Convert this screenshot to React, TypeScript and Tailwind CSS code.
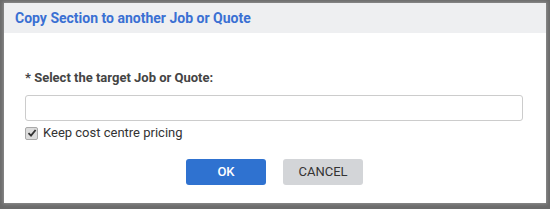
export default function App() {
  return (
    <div className="w-[550px] h-[209px] bg-[#6b6b6b] pt-[3px] pl-[4px] font-['Roboto',sans-serif]">
      <div className="w-[542px] h-[200px] bg-white flex flex-col shadow-[0_0_3px_1px_rgba(160,160,160,0.7)]">
        {/* Header */}
        <div className="h-[30px] bg-[#eeeff1] flex items-center px-[11px]">
          <h1 className="text-[14px] font-bold text-[#3a70d3]">Copy Section to another Job or Quote</h1>
        </div>

        {/* Body */}
        <div className="px-[21px] pt-[37px]">
          <label className="block text-[13px] font-bold text-[#444] leading-[16px]">* Select the target Job or Quote:</label>
          <input
            type="text"
            className="mt-[9px] block w-[498px] h-[26px] border border-[#cccccc] rounded-[3px] outline-none px-2 text-[13px]"
          />
          <label className="flex items-center gap-[5px] mt-[5px] text-[13px] text-[#333] leading-[14px]">
            <span className="w-[13px] h-[13px] rounded-[2px] border border-[#a9a9a9] bg-[#dcdcdc] flex items-center justify-center">
              <svg width="10" height="10" viewBox="0 0 10 10">
                <path d="M1.5 5.2 L4 7.6 L8.6 2" fill="none" stroke="#333" strokeWidth="1.8" />
              </svg>
            </span>
            Keep cost centre pricing
          </label>
        </div>

        {/* Actions */}
        <div className="flex justify-center gap-[17px] mt-[19px] pr-[1px]">
          <button className="w-[80px] h-[26px] bg-[#2f72d0] rounded-[3px] text-white text-[13px] font-medium">OK</button>
          <button className="w-[80px] h-[26px] bg-[#d3d5d8] rounded-[3px] text-[#333] text-[13px]">CANCEL</button>
        </div>
      </div>
    </div>
  )
}
